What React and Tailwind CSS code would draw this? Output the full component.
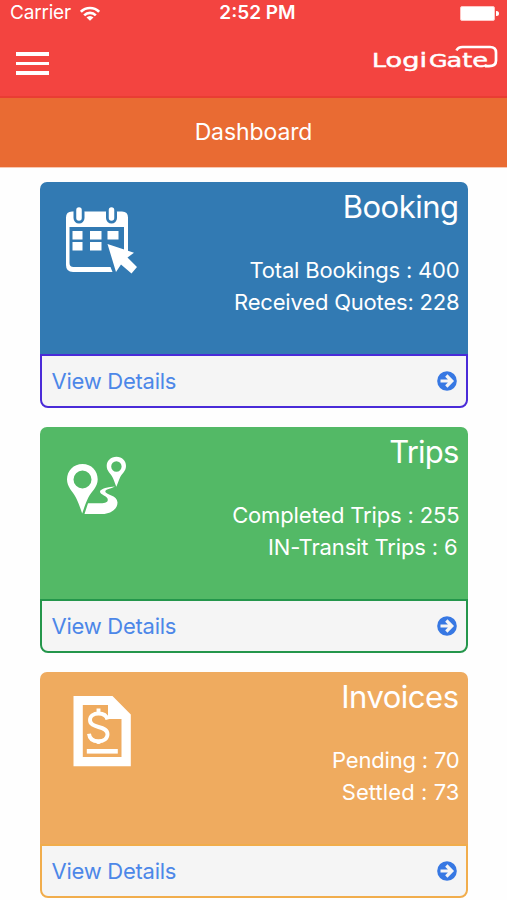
const BookingIcon = () => (
  <svg width="74" height="70" viewBox="0 0 74 70" fill="#fff">
    <path fillRule="evenodd" d="M7 5.500h50q6 0 6 6v34h-4V21H4.500v36q0 4 4 4h37l2 5H8q-7 0-7-7V11.500q0-6 6-6Z" />
    <path d="M14 6v6M46.500 6v6" stroke="#327ab3" strokeWidth="11" strokeLinecap="round" />
    <path d="M14 4v8M46.500 4v8" stroke="#fff" strokeWidth="5.500" strokeLinecap="round" />
    <path d="M7.500 25h10v8.500h-10zM25 25h11.500v8.500H25zM42.500 25h11v8.500h-11zM7.500 36h10v8.500h-10zM25 36h11.500v8.500H25z" />
    <path d="M42.500 38 69 46.800l-6.500 4.700L72 61 66.500 67.500 56 58.500l-5 7.500Z" />
  </svg>
);

const TripsIcon = () => (
  <svg width="62" height="60" viewBox="0 0 62 60" fill="#fff">
    <path fillRule="evenodd" d="M16.500 8C7.500 8 1 14.800 1 23.200c0 8 5.500 11.500 9 18.600 2.800 5.500 4.300 10.500 6.200 15.700 1.800-5.200 3.300-10.200 6-15.700 3.700-7.100 9.500-10.600 9.500-18.600C31.700 14.800 25.500 8 16.500 8Zm0 6.500a9 9 0 1 1 0 18 9 9 0 0 1 0-18Z" />
    <path fillRule="evenodd" d="M50.500 0.800c-5.700 0-9.800 4-9.800 9.200 0 5.300 4 7.200 6.200 12 1.600 3.500 2.300 6 3.400 8.700 1.200-2.700 2-5.200 3.500-8.700 2.200-4.800 6.200-6.700 6.200-12 0-5.200-3.900-9.200-9.500-9.200Zm-.1 4.500a5.200 5.200 0 1 1 0 10.400 5.200 5.200 0 0 1 0-10.400Z" />
    <path d="M49 30.500c-6 .4-15 2.200-15 5.100 0 3.600 7.800 4.200 7.800 8.200 0 3.600-5 3.500-9 3.500H22L18.500 58h18c7.500 0 15-4.500 15-11.500 0-7.500-12.200-7.800-12.200-11 0-2.500 5.500-2.600 9.700-5Z" />
  </svg>
);

const InvoiceIcon = () => (
  <svg width="58" height="72" viewBox="0 0 58 72" fill="#fff">
    <path fillRule="evenodd" d="M0.500 1H39.500L57.800 19.500V71.200H0.500ZM9.800 10V62H48.500V24H35V10Z" />
    <path d="M34.500 24.500C33.500 20.500 30 18.500 25.500 18.500c-5 0-8.500 2.500-8.500 6.500 0 4.500 4 5.800 8.500 7 5 1.300 9 2.700 9 7.300 0 4.500-4 7-9 7-5.500 0-9-2.500-9.500-7.500M25.500 13.500v5M25.500 46v3" fill="none" stroke="#fff" strokeWidth="3.900" />
    <path d="M13.800 54h31v4.600h-31z" />
  </svg>
);

const ArrowIcon = () => (
  <svg width="20" height="20" viewBox="0 0 20 20">
    <circle cx="10" cy="10" r="9.800" fill="#3778e3" />
    <path d="M3.500 10H14.500M9.300 4.500 14.800 10 9.300 15.500" fill="none" stroke="#f5f5f5" strokeWidth="3.200" />
  </svg>
);

const WifiIcon = () => (
  <svg width="20" height="15" viewBox="0 0 20 15" fill="none" stroke="#fff" strokeWidth="2.600">
    <path d="M.9 5.800a12.800 12.800 0 0 1 18.200 0M4.200 9.300a8.200 8.200 0 0 1 11.600 0" />
    <path d="M10 14.800 6.500 11.600a4.600 4.600 0 0 1 7 0Z" fill="#fff" stroke="none" />
  </svg>
);

const Logo = () => (
  <svg width="126" height="30" viewBox="0 0 126 30" fill="#fff" fontFamily="DejaVu Sans" stroke="#fff" strokeWidth="0.500">
    <text x="-1" y="24" fontSize="19" textLength="14" lengthAdjust="spacingAndGlyphs">L</text>
    <text x="12.500" y="24" fontSize="20" textLength="41.500" lengthAdjust="spacingAndGlyphs">ogi</text>
    <text x="56" y="24" fontSize="18.500" textLength="18.500" lengthAdjust="spacingAndGlyphs">G</text>
    <text x="73.500" y="24" fontSize="20" textLength="41.500" lengthAdjust="spacingAndGlyphs">ate</text>
    <path d="M83.500 7.500Q85 4 89.500 4H117Q123 4 123 9.500V17.500Q123 23.200 116 23.200H112" fill="none" strokeWidth="2.700" />
  </svg>
);

const cards = [
  {
    title: "Booking",
    titleClass: "tracking-[-0.500px]",
    icon: BookingIcon,
    iconClass: "ml-[25px] mt-6",
    bg: "bg-[#327ab3]",
    border: "border-[#4a2bd8]",
    lines: [
      { text: "Total Bookings : 400", className: "" },
      { text: "Received Quotes: 228", className: "" },
    ],
  },
  {
    title: "Trips",
    titleClass: "tracking-[-0.800px]",
    icon: TripsIcon,
    iconClass: "ml-[26px] mt-[29px]",
    bg: "bg-[#53b966]",
    border: "border-[#24964b]",
    lines: [
      { text: "Completed Trips : 255", className: "tracking-[-0.150px]" },
      { text: "IN-Transit Trips : 6", className: "mr-0.5 tracking-[-0.140px]" },
    ],
  },
  {
    title: "Invoices",
    titleClass: "tracking-[-0.500px]",
    icon: InvoiceIcon,
    iconClass: "ml-[33px] mt-[23px]",
    bg: "bg-[#efab5f]",
    border: "border-[#f1ad4c]",
    lines: [
      { text: "Pending : 70", className: "" },
      { text: "Settled : 73", className: "tracking-[0.080px]" },
    ],
  },
];

const Card = ({ title, titleClass, icon: Icon, iconClass, bg, border, lines }) => (
  <div className="h-[226px]">
    <div className={`flex h-[172px] items-start justify-between rounded-t-[7px] pr-2 text-white ${bg}`}>
      <div className={iconClass}><Icon /></div>
      <div className="flex flex-col items-end whitespace-nowrap">
        <h2 className={`mt-1.5 mr-px text-[31px] leading-[38px] ${titleClass}`}>{title}</h2>
        <div className="mt-7 flex flex-col items-end text-[22px] leading-8 tracking-[-0.190px]">
          {lines.map((l) => <p key={l.text} className={l.className}>{l.text}</p>)}
        </div>
      </div>
    </div>
    <div className={`flex h-[54px] items-center justify-between rounded-b-[8px] border-2 bg-[#f5f5f5] pr-[9px] pl-[9.500px] ${border}`}>
      <span className="text-[22px] tracking-[-0.260px] text-[#4c87e8]">View Details</span>
      <ArrowIcon />
    </div>
  </div>
);

export default function App() {
  return (
    <div className="h-[900px] w-[507px] overflow-hidden bg-[#fefefe] font-['Inter',sans-serif]">
      <header className="h-[98px] border-b-2 border-[#e93d33] bg-[#f34440] text-white">
        <div className="grid h-[26px] grid-cols-3 items-center pr-2 pl-2.5">
          <div className="flex items-center gap-[9px]">
            <span className="text-[19px] leading-6 tracking-[-0.200px]">Carrier</span>
            <WifiIcon />
          </div>
          <span className="pl-1.5 text-center text-[19px] leading-6 font-semibold whitespace-nowrap">2:52 PM</span>
          <div className="flex items-center justify-end gap-px">
            <div className="h-[15px] w-[35px] rounded-[2px] border border-[#ffc7c5] bg-white" />
            <div className="h-[5px] w-[3px] rounded-r-full bg-white" />
          </div>
        </div>
        <div className="flex h-[70px] items-start justify-between pr-2 pl-4">
          <div className="mt-[26px] flex w-[33px] flex-col gap-1.5">
            <div className="h-[3.500px] bg-white" />
            <div className="h-[3.500px] bg-white" />
            <div className="h-[3.500px] bg-white" />
          </div>
          <div className="mt-[17px]"><Logo /></div>
        </div>
      </header>
      <div className="flex h-[70px] items-center justify-center border-b border-[#f8c8b3] bg-[#e96b33]">
        <h1 className="text-[23px] tracking-[-0.100px] text-white">Dashboard</h1>
      </div>
      <main className="flex flex-col gap-[19px] pt-3.5 pr-[39.500px] pl-10">
        {cards.map((c) => <Card key={c.title} {...c} />)}
      </main>
    </div>
  );
}
